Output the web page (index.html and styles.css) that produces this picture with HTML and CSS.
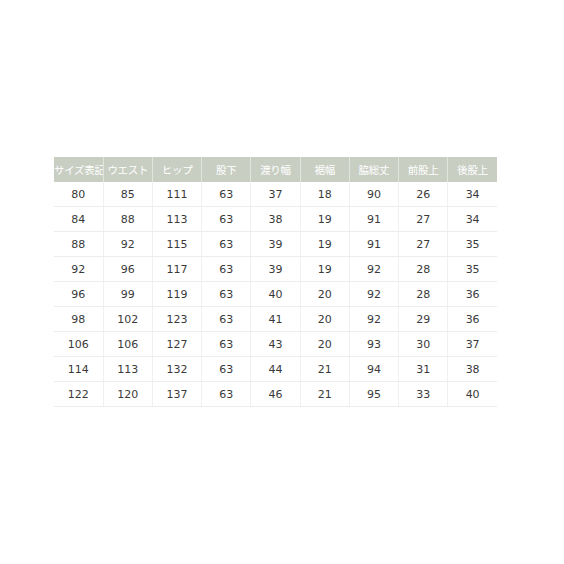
FILE: index.html
```html
<!DOCTYPE html>
<html>
<head>
<meta charset="utf-8">
<link rel="stylesheet" href="styles.css">
</head>
<body>
<div class="wrap">
<table class="size">
<thead>
<tr><th>サイズ表記</th><th>ウエスト</th><th>ヒップ</th><th>股下</th><th>渡り幅</th><th>裾幅</th><th>脇総丈</th><th>前股上</th><th>後股上</th></tr>
</thead>
<tbody>
<tr><td>80</td><td>85</td><td>111</td><td>63</td><td>37</td><td>18</td><td>90</td><td>26</td><td>34</td></tr>
<tr><td>84</td><td>88</td><td>113</td><td>63</td><td>38</td><td>19</td><td>91</td><td>27</td><td>34</td></tr>
<tr><td>88</td><td>92</td><td>115</td><td>63</td><td>39</td><td>19</td><td>91</td><td>27</td><td>35</td></tr>
<tr><td>92</td><td>96</td><td>117</td><td>63</td><td>39</td><td>19</td><td>92</td><td>28</td><td>35</td></tr>
<tr><td>96</td><td>99</td><td>119</td><td>63</td><td>40</td><td>20</td><td>92</td><td>28</td><td>36</td></tr>
<tr><td>98</td><td>102</td><td>123</td><td>63</td><td>41</td><td>20</td><td>92</td><td>29</td><td>36</td></tr>
<tr><td>106</td><td>106</td><td>127</td><td>63</td><td>43</td><td>20</td><td>93</td><td>30</td><td>37</td></tr>
<tr><td>114</td><td>113</td><td>132</td><td>63</td><td>44</td><td>21</td><td>94</td><td>31</td><td>38</td></tr>
<tr><td>122</td><td>120</td><td>137</td><td>63</td><td>46</td><td>21</td><td>95</td><td>33</td><td>40</td></tr>
</tbody>
</table>
</div>
</body>
</html>
```
FILE: styles.css
```css
html, body {
  margin: 0;
  padding: 0;
  background: #ffffff;
}
.wrap {
  padding: 157px 0 0 54px;
}
.size {
  border-collapse: collapse;
  table-layout: fixed;
  width: 443px;
  font-family: "DejaVu Sans", Verdana, sans-serif;
}
.size th {
  background: #c9cec3;
  color: #ffffff;
  font-family: "Noto Sans CJK JP", sans-serif;
  font-weight: normal;
  font-size: 10.5px;
  height: 25px;
  padding: 0;
  border-left: 1px solid #e2e5de;
  text-align: center;
  white-space: nowrap;
  overflow: hidden;
  letter-spacing: -0.3px;
}
.size th:first-child {
  border-left: none;
}
.size td {
  height: 24px;
  padding: 0;
  text-align: center;
  font-size: 11px;
  color: #3a3a3a;
  border-left: 1px solid #f0f0f0;
  border-bottom: 1px solid #ececec;
}
.size td:first-child {
  border-left: none;
}
```
